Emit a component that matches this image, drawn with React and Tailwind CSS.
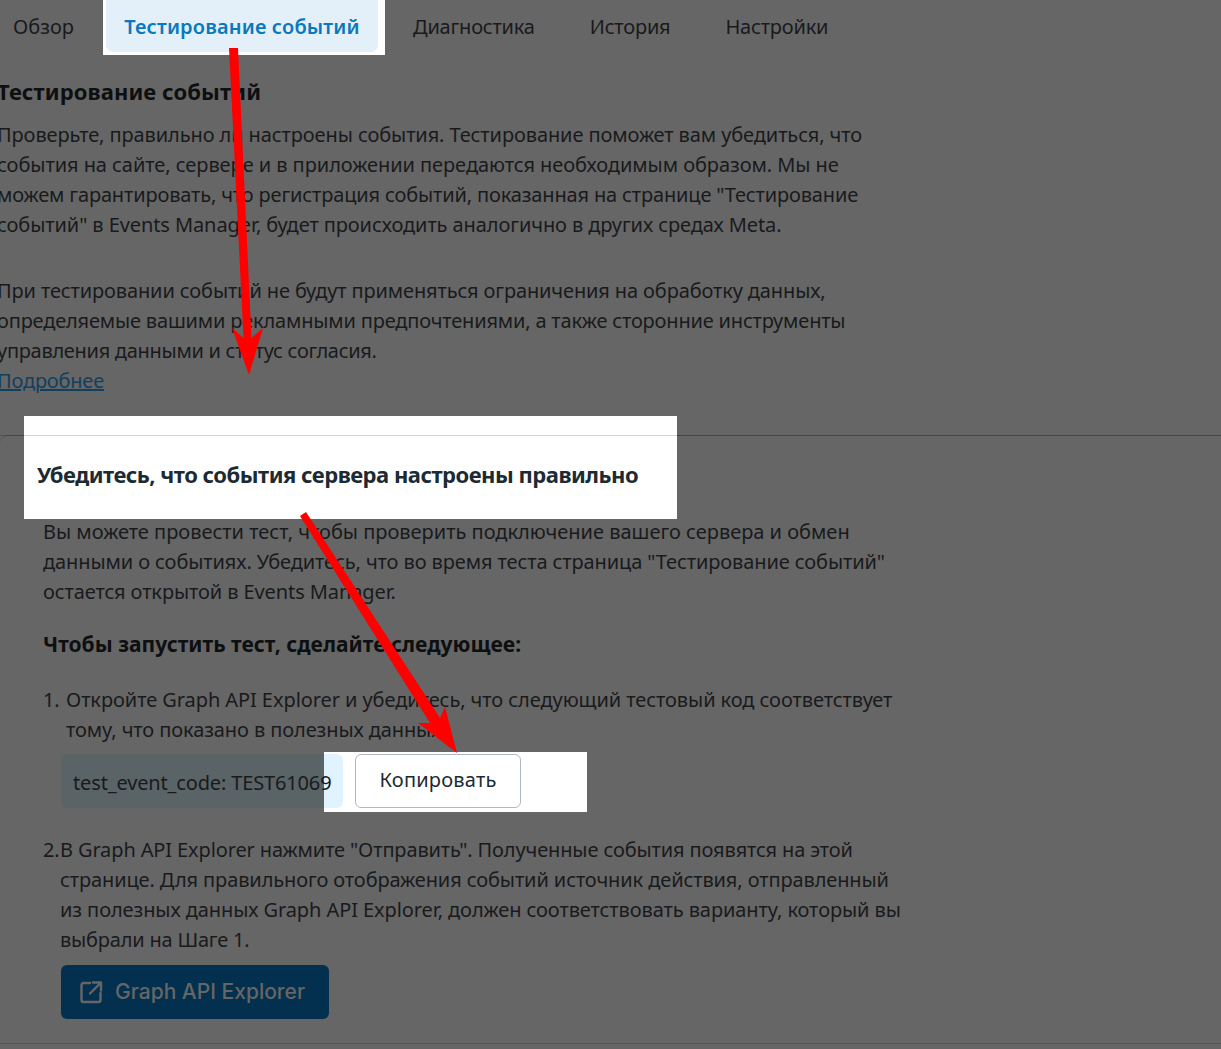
function Line({ className = "", children }) { return <span className={"block whitespace-nowrap " + className}>{children}</span>; }

export default function App() {
  return (
    <div className="relative h-[1049px] w-[1221px] overflow-hidden bg-[#666666] font-['Noto_Sans',sans-serif] text-[20px] leading-[30px] tracking-[-0.1px] text-[#191a1c]">
      <nav className="flex h-[55px] items-start tracking-[-0.2px]">
        <div className="w-[103px] pl-[13px] pt-[12px] tracking-normal">Обзор</div>
        <div className="bg-white pl-[3px] pr-[7px] pb-[3px]">
          <div className="flex h-[52px] w-[272px] items-center justify-center rounded-b-[7px] bg-[#e3eff9] pt-[2px] font-semibold tracking-[0.15px] text-[#0a78be]">Тестирование событий</div>
        </div>
        <div className="flex gap-[55px] pl-[28px] pt-[12px]">
          <span>Диагностика</span><span>История</span><span>Настройки</span>
        </div>
      </nav>
      <section className="-ml-[3px] mt-[21px]">
        <h2 className="text-[22px] font-bold leading-[30px] tracking-[0.1px] text-[#0e0f11]">Тестирование событий</h2>
        <p className="mt-[14px]">
          <Line>Проверьте, правильно ли настроены события. Тестирование поможет вам убедиться, что</Line>
          <Line className="tracking-[-0.06px]">события на сайте, сервере и в приложении передаются необходимым образом. Мы не</Line>
          <Line className="tracking-[-0.15px]">можем гарантировать, что регистрация событий, показанная на странице "Тестирование</Line>
          <Line className="tracking-[-0.09px]">событий" в Events Manager, будет происходить аналогично в других средах Meta.</Line>
        </p>
        <p className="mt-[36px]">
          <Line className="tracking-[-0.125px]">При тестировании событий не будут применяться ограничения на обработку данных,</Line>
          <Line className="tracking-[-0.18px]">определяемые вашими рекламными предпочтениями, а также сторонние инструменты</Line>
          <Line className="tracking-[-0.29px]">управления данными и статус согласия.</Line>
          <a className="block tracking-[-0.2px] text-[#123f5e] underline">Подробнее</a>
        </p>
      </section>
      <section className="relative mt-[39px] rounded-tl-[8px] border-t border-black/[.17]">
        <div className="absolute left-[24px] -top-[20px] h-[103px] w-[653px] bg-white" />
        <div className="relative -mt-px border-t border-black/[.17]" />
        <h3 className="relative ml-[37px] pt-[23px] text-[22px] font-bold leading-[30px] tracking-[-0.5px] text-[#1c2b33]">Убедитесь, что события сервера настроены правильно</h3>
        <div className="ml-[43px]">
          <p className="mt-[28px]">
            <Line className="tracking-[-0.01px]">Вы можете провести тест, чтобы проверить подключение вашего сервера и обмен</Line>
            <Line>данными о событиях. Убедитесь, что во время теста страница "Тестирование событий"</Line>
            <Line>остается открытой в Events Manager.</Line>
          </p>
          <p className="mt-[22px] text-[21px] font-bold tracking-[0.03px] text-[#0e0f11]">Чтобы запустить тест, сделайте следующее:</p>
          <div className="mt-[26px] flex">
            <span className="w-[23px]">1.</span>
            <p><Line className="tracking-[-0.075px]">Откройте Graph API Explorer и убедитесь, что следующий тестовый код соответствует</Line><Line>тому, что показано в полезных данных.</Line></p>
          </div>
          <div className="relative ml-[18px] mt-[9px] flex gap-[12px]">
            <div className="absolute left-[263px] -top-[2px] h-[60px] w-[263px] bg-white" />
            <div className="relative flex h-[54px] w-[282px] items-center rounded-[6px] bg-[linear-gradient(to_right,#5a6366_263px,#e0f3ff_263px)] pl-[12px] pt-[4px] tracking-[-0.15px]">test_event_code: TEST61069</div>
            <button className="relative h-[54px] w-[166px] rounded-[6px] border border-[#b0b8c4] bg-white pb-[2px] tracking-[0.2px] text-[#1c2b33]">Копировать</button>
          </div>
          <div className="mt-[27px] flex">
            <span className="w-[17px]">2.</span>
            <div>
              <p>
                <Line className="tracking-[-0.125px]">В Graph API Explorer нажмите "Отправить". Полученные события появятся на этой</Line>
                <Line className="tracking-[-0.11px]">странице. Для правильного отображения событий источник действия, отправленный</Line>
                <Line className="tracking-[-0.09px]">из полезных данных Graph API Explorer, должен соответствовать варианту, который вы</Line>
                <Line className="tracking-[-0.2px]">выбрали на Шаге 1.</Line>
              </p>
              <button className="ml-px mt-[10px] flex h-[54px] w-[268px] items-center gap-[12px] rounded-[6px] bg-[#03304e] pl-[18px] font-['Inter',sans-serif] text-[21px] font-medium tracking-normal text-[#666666]">
                <svg width="24" height="24" viewBox="0 0 24 24" fill="none" stroke="#666666" strokeWidth="2.4" strokeLinecap="round" strokeLinejoin="round"><path d="M11 3H4.5A2 2 0 0 0 2.5 5v15a2 2 0 0 0 2 2h15a2 2 0 0 0 2-2v-7" /><path d="M14 2.5h8v8M21.5 3 11 13.5" /></svg>
                Graph API Explorer
              </button>
            </div>
          </div>
        </div>
        <div className="mt-[24px] border-t border-black/[.17]" />
      </section>
      <svg className="absolute left-0 top-0 h-[1049px] w-[1221px]" viewBox="0 0 1221 1049" fill="#ff0000">
        <polygon points="229,48 238,48 251.5,338 263,328 249,375 232,328 243.5,338" />
        <polygon points="300,516 306,512 440,718 445,707 457,753 418,723 430,723" />
      </svg>
    </div>
  );
}
